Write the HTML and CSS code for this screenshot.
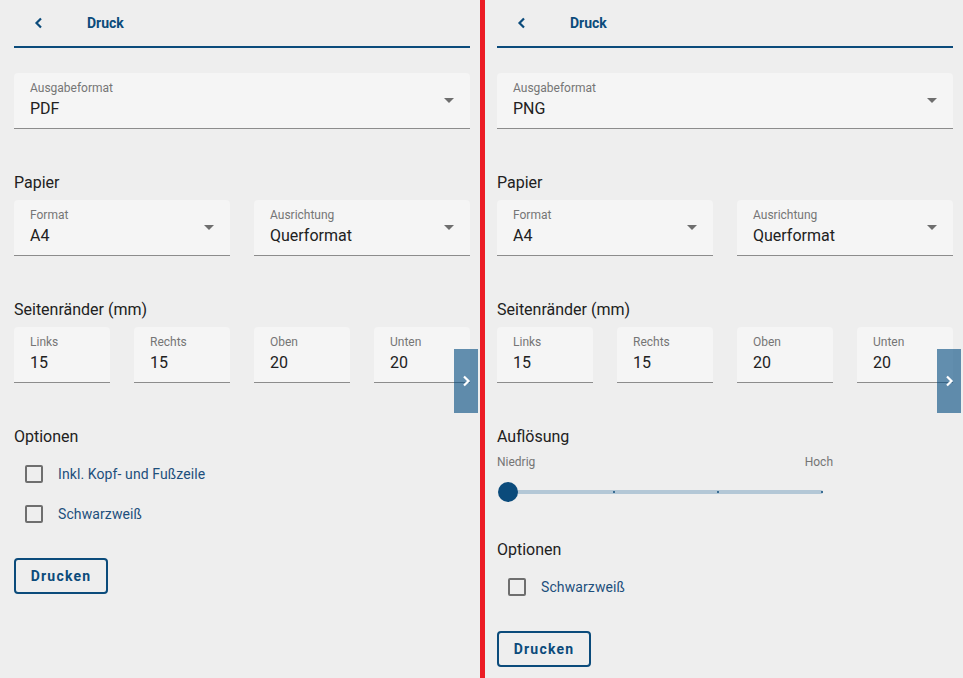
FILE: index.html
```html
<!DOCTYPE html>
<html lang="de">
<head>
<meta charset="utf-8">
<title>Druck</title>
<link rel="stylesheet" href="styles.css">
</head>
<body>
<div class="page">
  <section class="panel">
    <div class="content">
      <header class="head">
        <span class="back"><svg width="10" height="12" viewBox="0 0 10 12"><path d="M7 1.5 L2.5 6 L7 10.5" fill="none" stroke="#0b4b7b" stroke-width="2.2"/></svg></span>
        <span class="title">Druck</span>
      </header>
      <div class="field wide">
        <span class="label">Ausgabeformat</span>
        <span class="value">PDF</span>
        <span class="arrow"></span>
      </div>
      <h3 class="heading">Papier</h3>
      <div class="row two">
        <div class="field"><span class="label">Format</span><span class="value">A4</span><span class="arrow"></span></div>
        <div class="field"><span class="label">Ausrichtung</span><span class="value">Querformat</span><span class="arrow"></span></div>
      </div>
      <h3 class="heading">Seitenränder (mm)</h3>
      <div class="row four">
        <div class="field"><span class="label">Links</span><span class="value">15</span></div>
        <div class="field"><span class="label">Rechts</span><span class="value">15</span></div>
        <div class="field"><span class="label">Oben</span><span class="value">20</span></div>
        <div class="field"><span class="label">Unten</span><span class="value">20</span></div>
      </div>
      <h3 class="heading">Optionen</h3>
      <div class="checks">
        <label class="check"><span class="box"></span><span class="ctext">Inkl. Kopf- und Fußzeile</span></label>
        <label class="check"><span class="box"></span><span class="ctext">Schwarzweiß</span></label>
      </div>
      <button class="btn">Drucken</button>
    </div>
    <div class="tab"><svg width="10" height="12" viewBox="0 0 10 12"><path d="M3 1.5 L7.5 6 L3 10.5" fill="none" stroke="#fff" stroke-width="2.2"/></svg></div>
  </section>
  <div class="divider"></div>
  <section class="panel second">
    <div class="content">
      <header class="head">
        <span class="back"><svg width="10" height="12" viewBox="0 0 10 12"><path d="M7 1.5 L2.5 6 L7 10.5" fill="none" stroke="#0b4b7b" stroke-width="2.2"/></svg></span>
        <span class="title">Druck</span>
      </header>
      <div class="field wide">
        <span class="label">Ausgabeformat</span>
        <span class="value">PNG</span>
        <span class="arrow"></span>
      </div>
      <h3 class="heading">Papier</h3>
      <div class="row two">
        <div class="field"><span class="label">Format</span><span class="value">A4</span><span class="arrow"></span></div>
        <div class="field"><span class="label">Ausrichtung</span><span class="value">Querformat</span><span class="arrow"></span></div>
      </div>
      <h3 class="heading">Seitenränder (mm)</h3>
      <div class="row four">
        <div class="field"><span class="label">Links</span><span class="value">15</span></div>
        <div class="field"><span class="label">Rechts</span><span class="value">15</span></div>
        <div class="field"><span class="label">Oben</span><span class="value">20</span></div>
        <div class="field"><span class="label">Unten</span><span class="value">20</span></div>
      </div>
      <h3 class="heading">Auflösung</h3>
      <div class="slider">
        <div class="slabels"><span>Niedrig</span><span>Hoch</span></div>
        <div class="strack">
          <div class="rail">
            <span class="tick t1"></span><span class="tick t2"></span><span class="tick t3"></span>
            <span class="thumb"></span>
          </div>
        </div>
      </div>
      <h3 class="heading">Optionen</h3>
      <div class="checks">
        <label class="check"><span class="box"></span><span class="ctext">Schwarzweiß</span></label>
      </div>
      <button class="btn">Drucken</button>
    </div>
    <div class="tab"><svg width="10" height="12" viewBox="0 0 10 12"><path d="M3 1.5 L7.5 6 L3 10.5" fill="none" stroke="#fff" stroke-width="2.2"/></svg></div>
  </section>
</div>
</body>
</html>
```

FILE: styles.css
```css
* { box-sizing: border-box; }
html, body { margin: 0; padding: 0; }
body {
  background: #eeeeee;
  font-family: Roboto, "Noto Sans", "Liberation Sans", sans-serif;
  color: #212121;
  width: 963px;
  height: 678px;
  overflow: hidden;
}
.page { display: flex; height: 678px; }
.panel {
  position: relative;
  width: 480px;
  padding-left: 14px;
  flex: none;
}
.panel.second { width: 478px; padding-left: 12px; }
.divider { width: 5px; background: #ec1c24; flex: none; }
.content { width: 456px; }

.head {
  height: 48px;
  border-bottom: 2px solid #0b4b7b;
  display: flex;
  align-items: center;
}
.back { width: 24px; margin-left: 15px; display: flex; align-items: center; justify-content: center; }
.back svg { margin-left: -4px; }
.title {
  margin-left: 34px;
  font-size: 14px;
  font-weight: 700;
  color: #0b4b7b;
}

.field {
  position: relative;
  height: 56px;
  background: #f5f5f5;
  border-radius: 4px 4px 0 0;
  border-bottom: 1px solid #8c8c8c;
  padding: 7px 16px 0 16px;
  display: flex;
  flex-direction: column;
}
.field.wide { margin-top: 25px; }
.label { font-size: 12px; line-height: 16px; color: #757575; }
.value { font-size: 16px; line-height: 24px; color: #212121; margin-top: 1px; }
.arrow {
  position: absolute;
  right: 16px;
  top: 25px;
  width: 0; height: 0;
  border-left: 5px solid transparent;
  border-right: 5px solid transparent;
  border-top: 5px solid #6e6e6e;
}

.heading {
  margin: 42px 0 5px 0;
  font-size: 16px;
  line-height: 24px;
  font-weight: 400;
  color: #212121;
}
.row { display: grid; gap: 24px; }
.row.two { grid-template-columns: 1fr 1fr; }
.row.four { grid-template-columns: repeat(4, 1fr); }

.checks { display: flex; flex-direction: column; margin-top: 3px; }
.check { display: flex; align-items: center; height: 40px; }
.box {
  width: 18px; height: 18px;
  border: 2px solid #6e6e6e;
  border-radius: 2px;
  margin-left: 11px;
  flex: none;
}
.ctext { margin-left: 15px; font-size: 14px; color: #1d4f7c; letter-spacing: 0.1px; }

.btn {
  margin-top: 24px;
  width: 94px; height: 36px;
  background: transparent;
  border: 2px solid #0b4b7b;
  border-radius: 4px;
  font-family: inherit;
  font-size: 14px;
  font-weight: 700;
  letter-spacing: 1.2px;
  color: #0b4b7b;
  padding: 0;
}

.tab {
  position: absolute;
  right: 2px;
  top: 349px;
  width: 24px; height: 64px;
  background: rgba(0, 74, 127, 0.6);
  display: flex; align-items: center; justify-content: center;
}

.slider { width: 336px; }
.slabels {
  display: flex; justify-content: space-between;
  font-size: 12px; line-height: 16px; color: #757575;
  margin-top: 5px;
}
.strack { padding: 0 10px 0 11px; height: 44px; display: flex; align-items: center; }
.rail {
  position: relative;
  width: 100%;
  height: 4px;
  background: #b3c7d6;
  border-radius: 2px;
}
.tick {
  position: absolute; top: 1px;
  width: 2px; height: 2px;
  background: #3a6d93;
}
.t1 { left: 105px; }
.t2 { left: 209px; }
.t3 { left: 313px; }
.thumb {
  position: absolute;
  left: -10px; top: -8px;
  width: 20px; height: 20px;
  border-radius: 50%;
  background: #0b4b7b;
}
.slider + .heading { margin-top: 24px; }
```
